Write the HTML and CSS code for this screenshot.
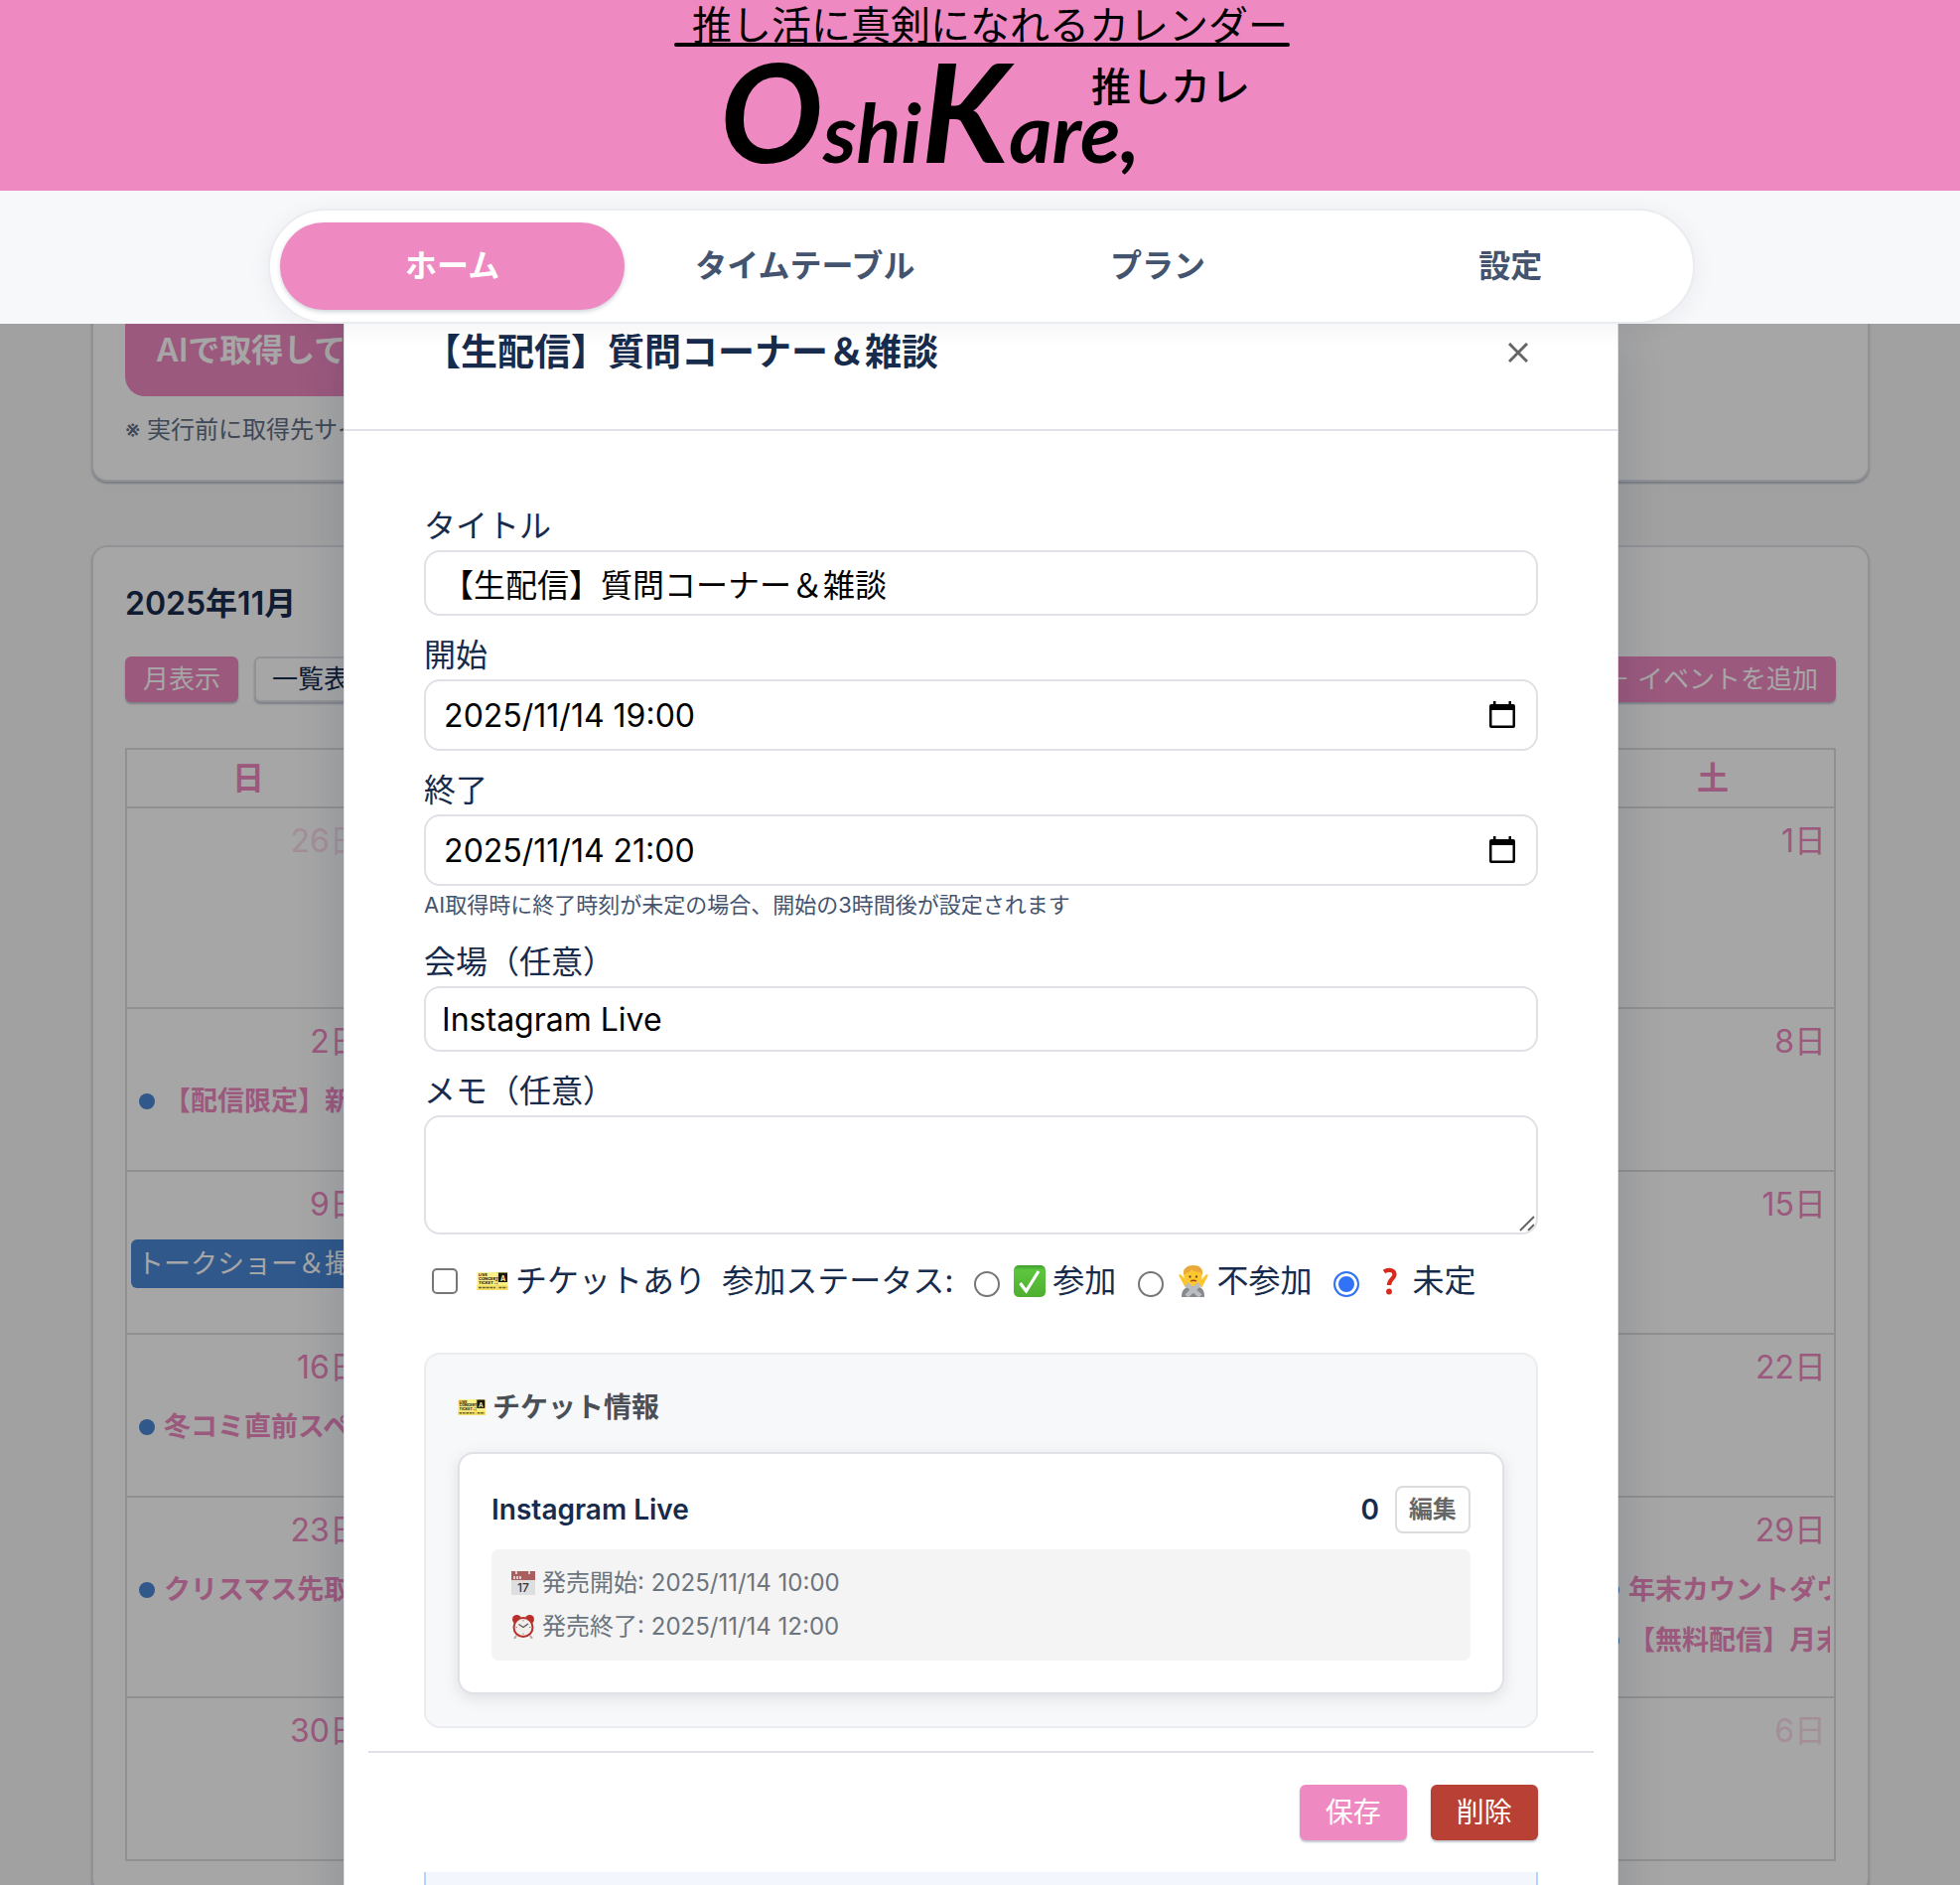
FILE: index.html
```html
<!DOCTYPE html>
<html lang="ja">
<head>
<meta charset="utf-8">
<meta name="viewport" content="width=device-width, initial-scale=1">
<title>OshiKare, 推しカレ</title>
<link rel="stylesheet" href="styles.css">
</head>
<body>
<svg class="sprite" aria-hidden="true">
  <symbol id="ticket" viewBox="0 0 31 18">
    <rect width="31" height="18" fill="#fbf08a"/>
    <path d="M0 13h31v5H0z" fill="#f6e268"/>
    <path d="M20.500 0v18" stroke="#c9b95c" stroke-dasharray="1.500 1.500" stroke-width=".8"/>
    <rect x="21.500" y=".5" width="9" height="9.500" fill="#17150c"/>
    <text class="ticket-print" x="1.500" y="4">LIVE</text>
    <text class="ticket-print" x="1.500" y="8">CONCERT</text>
    <text class="ticket-print" x="1.500" y="12">TICKET ♫</text>
    <text class="ticket-seat" x="23.500" y="9">A</text>
    <path d="M1.500 15.500h17M22 15.500h8" stroke="#6d6225" stroke-width="1.500" stroke-dasharray="3 .8"/>
  </symbol>
  <symbol id="calendar" viewBox="0 0 28 28">
    <path d="M1 5a2 2 0 0 1 2-2h2V0h2.500v3h13V0H23v3h2a2 2 0 0 1 2 2v20a2 2 0 0 1-2 2H3a2 2 0 0 1-2-2zM3.500 9v15.500h21V9z" fill-rule="evenodd"/>
  </symbol>
</svg>
<div class="app">
  <header class="top">
    <div class="brand">
      <svg class="logo" viewBox="0 0 640 192" role="img" aria-label="推し活に真剣になれるカレンダー OshiKare, 推しカレ">
        <text class="logo-tag" x="30" y="40">推し活に真剣になれるカレンダー</text>
        <path d="M14 45h616" stroke="#000" stroke-width="4" stroke-linecap="round"/>
        <text class="logo-name" x="58" y="164"><tspan class="logo-cap">O</tspan>shi<tspan class="logo-cap">K</tspan>are,</text>
        <text class="logo-kana" x="432" y="102">推しカレ</text>
      </svg>
    </div>
    <nav class="nav">
      <div class="tabs">
        <a class="tab tab-active" href="#home">ホーム</a>
        <a class="tab" href="#timetable">タイムテーブル</a>
        <a class="tab" href="#plan">プラン</a>
        <a class="tab" href="#settings">設定</a>
      </div>
    </nav>
  </header>

  <div class="stage">
    <main class="page">
      <section class="card">
        <button class="ai-button" type="button">AIで取得してカレンダーに追加</button>
        <p class="note">※ 実行前に取得先サイトの利用規約をご確認ください</p>
      </section>
      <section class="card">
        <h2 class="month">2025年11月</h2>
        <div class="toolbar">
          <button class="chip chip-pink" type="button">月表示</button>
          <button class="chip chip-plain" type="button">一覧表示</button>
          <button class="chip chip-pink chip-end" type="button">＋ イベントを追加</button>
        </div>
        <table class="calendar">
          <thead><tr><th>日</th><th>月</th><th>火</th><th>水</th><th>木</th><th>金</th><th>土</th></tr></thead>
          <tbody>
            <tr class="tall">
              <td class="out"><div class="day">26日</div></td><td class="out"><div class="day">27日</div></td><td class="out"><div class="day">28日</div></td><td class="out"><div class="day">29日</div></td><td class="out"><div class="day">30日</div></td><td class="out"><div class="day">31日</div></td><td><div class="day">1日</div></td>
            </tr>
            <tr>
              <td><div class="day">2日</div><div class="event">【配信限定】新曲発表</div></td><td><div class="day">3日</div></td><td><div class="day">4日</div></td><td><div class="day">5日</div></td><td><div class="day">6日</div></td><td><div class="day">7日</div></td><td><div class="day">8日</div></td>
            </tr>
            <tr>
              <td><div class="day">9日</div><div class="event event-block">トークショー＆撮影会</div></td><td><div class="day">10日</div></td><td><div class="day">11日</div></td><td><div class="day">12日</div></td><td><div class="day">13日</div></td><td><div class="day">14日</div></td><td><div class="day">15日</div></td>
            </tr>
            <tr>
              <td><div class="day">16日</div><div class="event">冬コミ直前スペシャル</div></td><td><div class="day">17日</div></td><td><div class="day">18日</div></td><td><div class="day">19日</div></td><td><div class="day">20日</div></td><td><div class="day">21日</div></td><td><div class="day">22日</div></td>
            </tr>
            <tr class="tall">
              <td><div class="day">23日</div><div class="event">クリスマス先取り</div></td><td><div class="day">24日</div></td><td><div class="day">25日</div></td><td><div class="day">26日</div></td><td><div class="day">27日</div></td><td><div class="day">28日</div></td><td><div class="day">29日</div><div class="event">年末カウントダウン</div><div class="event">【無料配信】月末雑談</div></td>
            </tr>
            <tr>
              <td><div class="day">30日</div></td><td class="out"><div class="day">1日</div></td><td class="out"><div class="day">2日</div></td><td class="out"><div class="day">3日</div></td><td class="out"><div class="day">4日</div></td><td class="out"><div class="day">5日</div></td><td class="out"><div class="day">6日</div></td>
            </tr>
          </tbody>
        </table>
      </section>
    </main>

    <div class="overlay">
      <div class="modal" role="dialog" aria-labelledby="modal-title">
        <div class="modal-head">
          <h2 class="modal-title" id="modal-title">【生配信】質問コーナー＆雑談</h2>
          <button class="close" type="button" aria-label="閉じる"><svg viewBox="0 0 20 20" width="20" height="20"><path d="M1 1l18 18M19 1L1 19" stroke="#666" stroke-width="3"/></svg></button>
        </div>
        <form class="form">
          <div class="field">
            <label for="f-title">タイトル</label>
            <input class="control" id="f-title" type="text" value="【生配信】質問コーナー＆雑談">
          </div>
          <div class="field">
            <label for="f-start">開始</label>
            <div class="control date">
              <input class="date-input" id="f-start" type="text" value="2025/11/14 19:00">
              <button class="date-button" type="button" aria-label="開始日を選択"><svg width="28" height="28"><use href="#calendar"/></svg></button>
            </div>
          </div>
          <div class="field">
            <label for="f-end">終了</label>
            <div class="control date">
              <input class="date-input" id="f-end" type="text" value="2025/11/14 21:00">
              <button class="date-button" type="button" aria-label="終了日を選択"><svg width="28" height="28"><use href="#calendar"/></svg></button>
            </div>
            <p class="hint">AI取得時に終了時刻が未定の場合、開始の3時間後が設定されます</p>
          </div>
          <div class="field">
            <label for="f-place">会場（任意）</label>
            <input class="control" id="f-place" type="text" value="Instagram Live">
          </div>
          <div class="field">
            <label for="f-memo">メモ（任意）</label>
            <textarea class="control memo" id="f-memo"></textarea>
          </div>
          <div class="options">
            <label class="option"><input class="tick" type="checkbox"><svg width="32" height="18"><use href="#ticket"/></svg>チケットあり</label>
            <span class="status">参加ステータス:</span>
            <label class="option"><input class="radio" type="radio" name="status"><svg width="32" height="32" viewBox="0 0 32 32"><defs><linearGradient id="g" x2="0" y2="1"><stop stop-color="#3f9c2c"/><stop offset=".15" stop-color="#5cc63f"/><stop offset="1" stop-color="#4fae30"/></linearGradient></defs><rect width="32" height="32" rx="5" fill="url(#g)"/><path d="M6.500 18l6 8L25 6" fill="none" stroke="#fff" stroke-width="3.200"/></svg>参加</label>
            <label class="option"><input class="radio" type="radio" name="status"><svg width="32" height="32" viewBox="0 0 32 32"><path d="M4 32c0-7 3-11 12-11s11 4 11 11z" fill="#85898e"/><path d="M1 10l2-1 8 9-3 5zM31 10l-2-1-8 9 3 5z" fill="#fbc52f"/><path d="M6.500 4h18v9c0 5-4 8-9 8s-9-3-9-8z" fill="#fdc72f"/><path d="M6 10C5 3 10 0 16 0s10 3 9 10l-2-3c-4 0-7-1-9-3-2 3-4 4-6 4z" fill="#e8a93a"/><path d="M9 31l13-12M23 31L9 19" stroke="#b9bcc0" stroke-width="4.500"/><path d="M12.500 10.500v2M19 10.500v2" stroke="#5c3a12" stroke-width="1.800"/><path d="M13 16q3-1.500 6 0" fill="none" stroke="#a33b20" stroke-width="1.300"/></svg>不参加</label>
            <label class="option"><input class="radio" type="radio" name="status" checked><svg width="32" height="32" viewBox="0 0 32 32"><path d="M11 6.500c4-3 10.500-2 10.500 3 0 4-5.500 4.500-5.500 10.500" fill="none" stroke="#d9291c" stroke-width="4.200"/><circle cx="16" cy="26.500" r="2.900" fill="#d9291c"/></svg>未定</label>
          </div>
          <section class="tickets">
            <h3 class="tickets-title"><svg width="28" height="16"><use href="#ticket"/></svg>チケット情報</h3>
            <div class="ticket">
              <div class="ticket-row">
                <strong class="ticket-name">Instagram Live</strong>
                <strong class="ticket-name">0</strong>
                <button class="edit" type="button">編集</button>
              </div>
              <div class="sale">
                <p class="sale-line"><svg width="24" height="24" viewBox="0 0 24 24"><rect width="24" height="24" fill="#dedede"/><path d="M0 0h24v9H0z" fill="#a85f5d"/><path d="M5 0v3M18 0v3M3 5v3M6 5v3M9 5v3" stroke="#eee" stroke-width="1.500"/><text x="12" y="21" text-anchor="middle" class="cal-num">17</text></svg>発売開始: 2025/11/14 10:00</p>
                <p class="sale-line"><svg width="24" height="24" viewBox="0 0 24 24"><path d="M5 21l-2 3M19 21l2 3" stroke="#b7a5a2" stroke-width="2"/><circle cx="5.500" cy="4.500" r="4.500" fill="#b8302c"/><circle cx="18.500" cy="4.500" r="4.500" fill="#b8302c"/><circle cx="12" cy="12.500" r="9.500" fill="#f3eeec" stroke="#b8302c" stroke-width="2"/><path d="M7.500 9.500l4.500 3 5-3.500" fill="none" stroke="#555" stroke-width="1.300"/><path d="M12 5v1.500M12 18.500V20M4.500 12.500H6M18 12.500h1.500" stroke="#888"/></svg>発売終了: 2025/11/14 12:00</p>
              </div>
            </div>
          </section>
          <div class="actions">
            <button class="action action-save" type="button">保存</button>
            <button class="action action-delete" type="button">削除</button>
          </div>
          <div class="info"></div>
        </form>
      </div>
    </div>
  </div>
</div>
</body>
</html>
```
FILE: styles.css
```css
:root {
  --pink: #ef89c1;
  --ink: #172b4d;
  --slate: #44546f;
  --line: #dfe1e6;
  --blue: #4a87d5;
}

* { box-sizing: border-box; }

body {
  margin: 0;
  background: #f7f7f7;
  color: var(--ink);
  font-family: Inter, "Noto Sans CJK JP", sans-serif;
  font-size: 32px;
  line-height: 48px;
}

button, input, textarea { font-family: inherit; color: inherit; }
button { cursor: pointer; padding: 0; border: 0; }
h2, h3, p { margin: 0; }
svg { display: block; flex: none; }
.sprite { position: absolute; width: 0; height: 0; }
.ticket-print { font-size: 4px; font-weight: 800; fill: #2c2810; }
.ticket-seat { font-size: 7px; font-weight: 700; fill: #fbf08a; }

.app { display: flex; flex-direction: column; height: 100vh; overflow: hidden; }

/* header and navigation */
.top { position: relative; z-index: 2; flex: none; }
.brand { display: flex; justify-content: center; background: var(--pink); }
.logo { width: 640px; height: 192px; }
.logo-tag { font-size: 40px; }
.logo-kana { font-size: 40px; font-weight: 500; }
.logo-name { font-family: Lato, sans-serif; font-size: 83px; font-weight: 700; font-style: italic; }
.logo-cap { font-size: 138px; }

.nav { padding: 18px 267px 0 270px; background: #f7f8fa; }
.tabs {
  display: flex;
  gap: 8px;
  padding: 12px 10px;
  border: 2px solid #ebecf0;
  border-radius: 58px;
  background: #fff;
  box-shadow: 0 4px 24px rgba(9, 30, 66, .06);
}
.tab {
  flex: 1;
  border-radius: 44px;
  color: var(--slate);
  font-weight: 600;
  line-height: 88px;
  text-align: center;
  text-decoration: none;
}
.tab-active { background: var(--pink); color: #fff; box-shadow: 0 2px 4px rgba(9, 30, 66, .2); }

/* calendar page */
.stage { position: relative; flex: 1; min-height: 0; overflow: hidden; }
.page { display: flex; flex-direction: column; gap: 64px; margin-top: -54px; padding: 0 91px 0 92px; }
.card {
  padding: 32px;
  border: 2px solid var(--line);
  border-radius: 16px;
  background: #fff;
  box-shadow: 0 2px 2px rgba(9, 30, 66, .25);
}
.ai-button {
  padding: 0 31px;
  border-radius: 20px;
  background: var(--pink);
  color: #fff;
  font-size: 32px;
  font-weight: 600;
  line-height: 93px;
}
.note { margin-top: 16px; color: #626f86; font-size: 24px; line-height: 36px; }
.month { font-size: 32px; font-weight: 600; line-height: 50px; }
.toolbar { display: flex; gap: 16px; margin: 28px 0 46px; }
.chip {
  padding: 0 18px;
  border-radius: 6px;
  font-size: 26px;
  line-height: 46px;
  box-shadow: 0 2px 2px rgba(9, 30, 66, .25);
}
.chip-pink { background: var(--pink); color: #fff; }
.chip-plain { padding: 0 16px; border: 2px solid var(--line); background: #fff; line-height: 42px; }
.chip-end { margin-left: auto; }

.calendar { width: 100%; table-layout: fixed; border-collapse: collapse; }
.calendar th, .calendar td { padding: 0; border: 2px solid #ddd; color: var(--pink); }
.calendar th { height: 59px; font-weight: 600; }
.calendar td { height: 164px; vertical-align: top; }
.calendar .tall td { height: 202px; }
.day { padding: 9px 8px 11px; text-align: right; }
.out .day { opacity: .3; }
.event {
  display: flex;
  align-items: center;
  gap: 9px;
  height: 49px;
  margin: 0 4px 2px;
  padding-left: 8px;
  overflow: hidden;
  font-size: 27px;
  font-weight: 600;
  white-space: nowrap;
}
.event::before { content: ""; flex: none; width: 16px; height: 16px; border-radius: 50%; background: var(--blue); }
.event-block { padding-left: 6px; border-radius: 6px; background: var(--blue); color: #fff; font-weight: 400; }
.event-block::before { display: none; }

/* event dialog */
.overlay {
  position: absolute;
  inset: 0;
  display: flex;
  justify-content: center;
  padding-left: 2px;
  overflow: hidden;
  background: rgba(0, 0, 0, .35);
}
.modal {
  align-self: flex-start;
  width: 65.1%;
  min-height: 100%;
  border: solid var(--line);
  border-width: 0 1px;
  background: #fff;
  box-shadow: 0 16px 48px rgba(9, 30, 66, .16);
}
.modal-head {
  display: flex;
  justify-content: space-between;
  padding: 0 80px 48px;
  border-bottom: 2px solid var(--line);
}
.modal-title { font-size: 37px; font-weight: 600; line-height: 58px; }
.close { display: grid; place-items: center; width: 40px; height: 58px; background: none; }
.form { padding: 72px 80px 0; }
.field { margin-bottom: 16px; }
.field label { display: block; }
.control {
  display: block;
  width: 100%;
  height: 66px;
  padding: 0 16px;
  border: 2px solid var(--line);
  border-radius: 16px;
  background: #fff;
  color: #000;
  font-size: 32px;
}
.date { display: flex; align-items: center; height: 72px; padding: 0 20px 0 18px; }
.date-input { flex: 1; min-width: 0; padding: 0; border: 0; background: none; font-size: 32px; }
.date-button { background: none; }
.memo {
  height: 120px;
  resize: vertical;
  background: #fff url("data:image/svg+xml,%3Csvg xmlns='http://www.w3.org/2000/svg' width='16' height='16'%3E%3Cpath d='M1 15L15 1M9 15l6-6' stroke='%23666' stroke-width='2'/%3E%3C/svg%3E") no-repeat right 1px bottom 1px;
}
.memo::-webkit-resizer { background: none; }
.hint { padding-top: 2px; color: var(--slate); font-size: 22px; line-height: 35px; }

.options { display: flex; margin: 23px 0 48px 8px; }
.option { display: flex; align-items: center; gap: 7px; margin-right: 22px; }
.option:first-child { margin-right: 16px; }
.status { margin-right: 21px; }
.tick, .radio {
  appearance: none;
  flex: none;
  width: 26px;
  height: 26px;
  margin: 0 7px 0 0;
  border: 2px solid #767676;
  border-radius: 50%;
  background: #fff;
}
.tick { margin-right: 12px; border-radius: 5px; }
.radio { margin-top: 5px; }
.radio:checked { border-color: #3173f6; background: #3173f6; box-shadow: inset 0 0 0 3px #fff; }

.tickets { padding: 32px; border: 2px solid #ebecf0; border-radius: 16px; background: #f7f8fa; }
.tickets-title {
  display: flex;
  align-items: center;
  gap: 7px;
  margin-bottom: 24px;
  color: #495057;
  font-size: 28px;
  font-weight: 600;
  line-height: 42px;
}
.ticket {
  padding: 32px;
  border: 2px solid var(--line);
  border-radius: 16px;
  background: #fff;
  box-shadow: 0 4px 16px rgba(0, 0, 0, .1);
}
.ticket-row { display: flex; align-items: center; gap: 16px; }
.ticket-name { font-size: 28px; font-weight: 600; }
.ticket-name:first-child { margin-right: auto; }
.edit {
  padding: 0 12px;
  border: 2px solid #ddd;
  border-radius: 8px;
  background: #fff;
  color: #666;
  font-size: 24px;
  font-weight: 600;
  line-height: 44px;
}
.sale { margin-top: 16px; padding: 12px 20px; border-radius: 8px; background: #f4f4f4; }
.sale-line { display: flex; align-items: center; gap: 7px; color: #6c757d; font-size: 24px; line-height: 44px; }
.cal-num { fill: #333; font-size: 12px; font-weight: 500; }

.actions {
  display: flex;
  justify-content: flex-end;
  gap: 24px;
  margin: 23px -56px 0;
  padding: 32px 56px;
  border-top: 2px solid var(--line);
}
.action {
  width: 108px;
  border-radius: 6px;
  color: #fff;
  font-size: 28px;
  line-height: 56px;
  box-shadow: 0 2px 2px rgba(9, 30, 66, .25);
}
.action-save { background: var(--pink); }
.action-delete { background: #b94034; }
.info { height: 96px; border: solid #b3d4ff; border-width: 0 2px; background: #f3f7fd; }
```
